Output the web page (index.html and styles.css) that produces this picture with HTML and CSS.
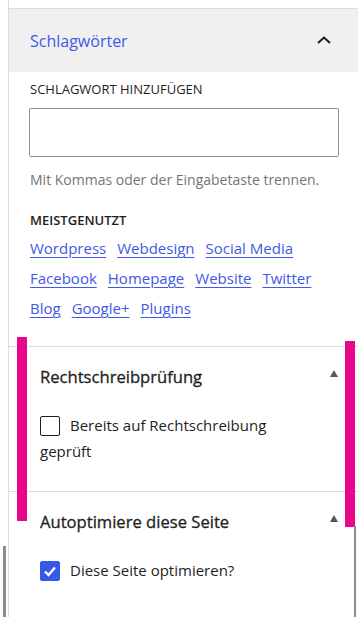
FILE: index.html
```html
<!DOCTYPE html>
<html>
<head>
    <meta charset="utf-8">
    <title>Schlagwörter</title>
    <link rel="stylesheet" href="styles.css">
</head>
<body>
    <div class="sidebar">
        <div class="top-gap"></div>

        <div class="tags-box">
            <div class="tags-header">
                <span class="tags-title">Schlagwörter</span>
                <svg class="chevron" width="16" height="10" viewBox="0 0 16 10">
                    <path d="M2 8 L8 2.5 L14 8" fill="none" stroke="#1e1e1e" stroke-width="2"/>
                </svg>
            </div>
            <div class="tags-body">
                <div class="field-label">SCHLAGWORT HINZUFÜGEN</div>
                <input type="text" class="tag-input">
                <div class="help-text">Mit Kommas oder der Eingabetaste trennen.</div>
                <div class="most-used">MEISTGENUTZT</div>
                <div class="tag-cloud">
                    <a href="#">Wordpress</a>
                    <a href="#">Webdesign</a>
                    <a href="#">Social Media</a>
                    <a href="#">Facebook</a>
                    <a href="#">Homepage</a>
                    <a href="#">Website</a>
                    <a href="#">Twitter</a>
                    <a href="#">Blog</a>
                    <a href="#">Google+</a>
                    <a href="#">Plugins</a>
                </div>
            </div>
        </div>

        <div class="meta-box">
            <div class="meta-header">
                <span class="meta-title">Rechtschreibprüfung</span>
                <span class="toggle-arrow"></span>
            </div>
            <label class="check-row">
                <span class="checkbox"></span>Bereits auf Rechtschreibung geprüft
            </label>
        </div>

        <div class="meta-box">
            <div class="meta-header">
                <span class="meta-title">Autoptimiere diese Seite</span>
                <span class="toggle-arrow"></span>
            </div>
            <label class="check-row">
                <span class="checkbox checked">
                    <svg width="20" height="20" viewBox="0 0 20 20">
                        <path d="M5 10.5 L8.5 14 L15 6.5" fill="none" stroke="#fff" stroke-width="2.4"/>
                    </svg>
                </span>Diese Seite optimieren?
            </label>
        </div>
    </div>

    <!-- highlight marks and neighbouring edges -->
    <div class="mark mark-left"></div>
    <div class="mark mark-right"></div>
    <div class="edge edge-left"></div>
    <div class="edge edge-right"></div>
</body>
</html>
```

FILE: styles.css
```css
body {
    margin: 0;
    padding: 0;
    width: 358px;
    height: 617px;
    overflow: hidden;
    position: relative;
    background-color: #fff;
    font-family: "Open Sans", "Noto Sans", Arial, sans-serif;
    color: #1e1e1e;
}

.sidebar {
    margin-left: 8px;
    border-left: 1px solid #dcdcde;
    height: 617px;
}

.top-gap {
    height: 8px;
}

/* Schlagwörter box */
.tags-header {
    height: 63px;
    border-top: 1px solid #dcdcde;
    background-color: #f0f0f1;
    display: flex;
    align-items: center;
    justify-content: space-between;
    padding: 0 26px 0 21px;
}
.tags-title {
    color: #4358e6;
    font-size: 16px;
    font-weight: 500;
}
.chevron {
    margin-top: -2px;
}

.tags-body {
    padding: 8px 19px 23px 20px;
}
.field-label {
    font-size: 13px;
    line-height: 18px;
    padding-left: 1px;
}
.tag-input {
    display: block;
    box-sizing: border-box;
    width: 310px;
    height: 49px;
    margin-top: 10px;
    border: 1px solid #8c8f94;
    border-radius: 2px;
}
.help-text {
    margin-top: 13px;
    font-size: 14px;
    line-height: 20px;
    color: #757575;
    padding-left: 1px;
}
.most-used {
    margin-top: 21px;
    font-size: 13px;
    line-height: 18px;
    font-weight: 600;
    padding-left: 1px;
}
.tag-cloud {
    margin-top: 4px;
    padding-left: 1px;
    display: flex;
    flex-wrap: wrap;
    column-gap: 11px;
    width: 310px;
}
.tag-cloud a {
    color: #4358e6;
    font-size: 15px;
    line-height: 30px;
    text-decoration: underline;
    text-underline-offset: 3px;
}

/* meta boxes */
.meta-box {
    border-top: 1px solid #dcdcde;
    padding: 17px 20px 27px 31px;
}
.meta-header {
    display: flex;
    align-items: center;
    justify-content: space-between;
    height: 24px;
}
.meta-title {
    font-size: 16.6px;
    -webkit-text-stroke: 0.3px #1e1e1e;
}
.toggle-arrow {
    width: 0;
    height: 0;
    border-left: 4.5px solid transparent;
    border-right: 4.5px solid transparent;
    border-bottom: 7px solid #50575e;
    margin-top: -5px;
}
.check-row {
    display: block;
    margin-top: 24px;
    font-size: 15px;
    line-height: 26px;
    width: 250px;
}
.checkbox {
    display: inline-block;
    box-sizing: border-box;
    width: 20px;
    height: 20px;
    border: 1px solid #1e1e1e;
    border-radius: 2px;
    vertical-align: -5px;
    margin-right: 10px;
}
.checkbox.checked {
    background-color: #3858e9;
    border-color: #3858e9;
}
.checkbox svg {
    display: block;
    margin: -1px;
}

/* overlays */
.mark {
    position: absolute;
    background-color: #e8078a;
}
.mark-left {
    left: 17px;
    top: 337px;
    width: 10px;
    height: 184px;
}
.mark-right {
    left: 345px;
    top: 341px;
    width: 10px;
    height: 186px;
}
.edge {
    position: absolute;
    background-color: #8c8c8c;
}
.edge-left {
    left: 3px;
    top: 546px;
    width: 3px;
    height: 71px;
}
.edge-right {
    left: 354px;
    top: 526px;
    width: 2px;
    height: 91px;
}
```
